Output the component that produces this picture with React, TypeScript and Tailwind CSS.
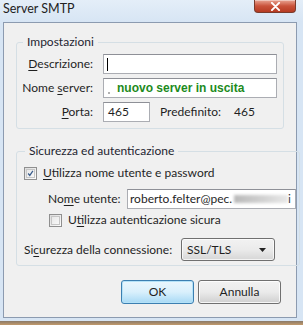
import * as React from "react"

const ui = "font-['Lato',sans-serif]"

function CloseButton() {
  return (
    <div className="mr-[7px] flex h-[13px] w-[42px] items-center justify-center rounded-b-[4px] border border-t-0 border-[#7a3b2c] bg-gradient-to-b from-[#e8a493] via-[#c9523a] to-[#b63b22] shadow-[inset_0_1px_0_rgba(255,255,255,0.4)]">
      <svg viewBox="0 0 12 10" className="h-[9px] w-[11px]" aria-hidden="true">
        <path d="M2 1 10 9M10 1 2 9" stroke="#fff" strokeWidth="2.2" strokeLinecap="round" />
      </svg>
    </div>
  )
}

function Checkbox({ checked = false }: { checked?: boolean }) {
  return (
    <div className="flex h-[13px] w-[13px] shrink-0 items-center justify-center border border-[#8f8f8f] bg-gradient-to-br from-[#dcdcdc] to-[#fdfdfd]">
      <div className="flex h-[9px] w-[9px] items-center justify-center border border-[#c6c6c6] bg-gradient-to-br from-[#e8e8e8] to-[#f8f8f8]">
        {checked && (
          <svg viewBox="0 0 9 9" className="h-[9px] w-[9px]" aria-hidden="true">
            <path d="M1.5 4.5 3.6 7 7.6 1.2" stroke="#3a5d8c" strokeWidth="1.6" fill="none" />
          </svg>
        )}
      </div>
    </div>
  )
}

function Field({ className = "", children }: { className?: string; children?: React.ReactNode }) {
  return (
    <div className={`flex h-[20px] items-center whitespace-nowrap border border-[#abadb3] border-t-[#8e9097] bg-white px-[2px] ${className}`}>
      {children}
    </div>
  )
}

function U({ children }: { children: React.ReactNode }) {
  return <span className="underline underline-offset-[2px]">{children}</span>
}

export default function App() {
  return (
    <div className={`flex h-[325px] w-[303px] flex-col overflow-hidden bg-[#d7e5f4] text-[12px] leading-[16px] text-[#1f1f1f] ${ui}`}>
      <div className="flex h-[22px] shrink-0 items-start justify-between bg-gradient-to-b from-[#e4eef8] to-[#d7e5f4]">
        <span className="pl-[3px] pt-[1px] text-[12.5px] text-[#222]">Server SMTP</span>
        <CloseButton />
      </div>

      <div className="ml-[3px] mr-[6px] flex h-[296px] shrink-0 flex-col whitespace-nowrap border border-[#8c9bb0] bg-[#f0f0f0] px-[12px] pt-[11px]">
        <fieldset className="rounded-[3px] border border-[#d5dfe5] px-[5px] pb-[6px]">
          <legend className="ml-[1px] px-[4px] text-[#1e2430]">Impostazioni</legend>
          <div className="mt-[4px] grid grid-cols-[71px_1fr] items-center gap-x-[10px] gap-y-[4px]">
            <span className="text-right">
              <U>D</U>escrizione:
            </span>
            <Field className="mr-[1px]">
              <span className="ml-[1px] h-[13px] w-px bg-black" />
            </Field>

            <span className="text-right">
              Nome <U>s</U>erver:
            </span>
            <Field className="relative mr-[1px]">
              <span className="absolute bottom-[3px] left-[4px] h-[2px] w-[2px] rounded-full bg-[#999]" />
              <span className="ml-[11px] font-['Liberation_Sans',sans-serif] text-[12px] font-bold text-[#1d8b1d]">
                nuovo server in uscita
              </span>
            </Field>

            <span className="text-right">
              <U>P</U>orta:
            </span>
            <div className="flex items-center">
              <Field className="w-[47px]">
                <span className="pl-[2px]">465</span>
              </Field>
              <span className="ml-[10px]">Predefinito:</span>
              <span className="ml-[13px]">465</span>
            </div>
          </div>
        </fieldset>

        <fieldset className="mt-[14px] rounded-[3px] border border-[#d5dfe5] pb-[4px] pl-[7px] pr-[3px]">
          <legend className="ml-[1px] px-[4px] text-[#1e2430]">Sicurezza ed autenticazione</legend>
          <div className="mt-[6px] flex items-center gap-[6px]">
            <Checkbox checked />
            <span>
              <U>U</U>tilizza nome utente e password
            </span>
          </div>
          <div className="mt-[8px] flex items-center pl-[24px]">
            <span className="w-[79px]">
              No<U>m</U>e utente:
            </span>
            <Field className="flex-1">
              <span>roberto.felter@pec.</span>
              <span className="ml-[2px] h-[8px] w-[54px] bg-gradient-to-r from-[#b9b9b9] via-[#d0d0d0] to-[#e8e8e8] blur-[1.5px]" />
              <span className="ml-auto pr-[2px]">i</span>
            </Field>
          </div>
          <div className="mt-[3px] flex items-center gap-[6px] pl-[25px]">
            <Checkbox />
            <span>
              U<U>t</U>ilizza autenticazione sicura
            </span>
          </div>
          <div className="mt-[10px] flex items-center">
            <span className="w-[157px]">
              Si<U>c</U>urezza della connessione:
            </span>
            <div className="flex h-[23px] w-[94px] items-center justify-between rounded-[3px] border border-[#707070] bg-gradient-to-b from-[#f2f2f2] via-[#ebebeb] to-[#d6d6d6] pl-[5px] pr-[8px] shadow-[inset_0_0_0_1px_rgba(255,255,255,0.7)]">
              <span>SSL/TLS</span>
              <svg viewBox="0 0 7 4" className="h-[4px] w-[7px]" aria-hidden="true">
                <path d="M0 0h7L3.5 4z" fill="#222" />
              </svg>
            </div>
          </div>
        </fieldset>

        <div className="mt-[14px] flex justify-end gap-[4px] pr-[3px]">
          <button
            type="button"
            className="h-[24px] w-[73px] rounded-[3px] border border-[#3c7fb1] bg-gradient-to-b from-[#eaf6fd] via-[#d9f0fc] to-[#a7d9f5] shadow-[inset_0_0_0_1px_#b4e2f8]"
          >
            OK
          </button>
          <button
            type="button"
            className="h-[24px] w-[83px] rounded-[3px] border border-[#707070] bg-gradient-to-b from-[#f2f2f2] via-[#ebebeb] to-[#cfcfcf] shadow-[inset_0_0_0_1px_rgba(255,255,255,0.8)]"
          >
            Annulla
          </button>
        </div>
      </div>

      <div className="h-[3px] shrink-0" />
      <div className="h-[4px] shrink-0 bg-gradient-to-b from-[#8a7a68] to-[#c29a6c]" />
    </div>
  )
}
